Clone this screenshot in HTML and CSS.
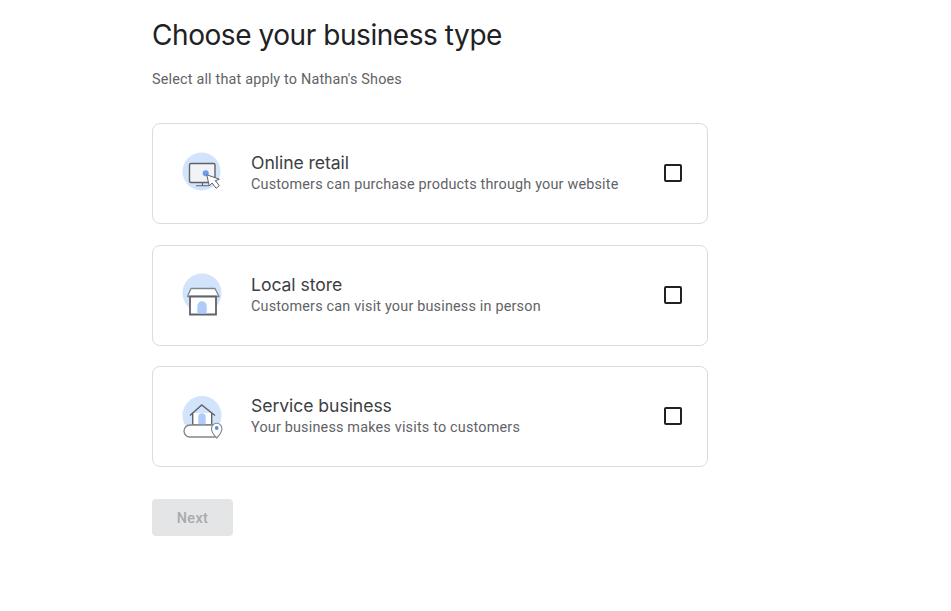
FILE: index.html
```html
<!DOCTYPE html>
<html lang="en">
<head>
<meta charset="utf-8">
<title>Choose your business type</title>
<link rel="stylesheet" href="styles.css">
</head>
<body>
<main class="page">
  <h1 class="title">Choose your business type</h1>
  <p class="subtitle">Select all that apply to Nathan's Shoes</p>
  <div class="cards">
    <label class="card">
      <svg class="icon" viewBox="0 0 48 48" width="48" height="48" aria-hidden="true">
        <circle cx="23.500" cy="22.500" r="19" fill="#d2e3fc"/>
        <rect x="11.500" y="14.500" width="25.500" height="19" rx="1.500" fill="#f1f3f4" stroke="#5f6368" stroke-width="1.400"/>
        <path d="M18 36.800h13M24.500 33.500v3" fill="none" stroke="#5f6368" stroke-width="1.100"/>
        <circle cx="27.700" cy="24.300" r="3" fill="#669df6"/>
        <path d="M28.700 25.700l2.600 11.300 2.800-3 4 5.300 3.200-2.600-4-5 4-1.500z" fill="#fff" stroke="#5f6368" stroke-width="1" stroke-linejoin="round"/>
      </svg>
      <span class="text">
        <span class="name">Online retail</span>
        <span class="desc">Customers can purchase products through your website</span>
      </span>
      <span class="box"></span>
    </label>
    <label class="card">
      <svg class="icon" viewBox="0 0 48 48" width="48" height="48" aria-hidden="true">
        <circle cx="24" cy="22" r="19.500" fill="#d2e3fc"/>
        <path d="M9.500 25.500l3.500-8h24l4 8z" fill="#fff" stroke="#80868b" stroke-width="1.300" stroke-linejoin="round"/>
        <path d="M12 25.500h26V43.500H12z" fill="#fff" stroke="#5f6368" stroke-width="1.800"/>
        <path d="M19.300 42.600V35a4.700 4.700 0 0 1 9.400 0v7.600z" fill="#aecbfa"/>
      </svg>
      <span class="text">
        <span class="name">Local store</span>
        <span class="desc">Customers can visit your business in person</span>
      </span>
      <span class="box"></span>
    </label>
    <label class="card">
      <svg class="icon" viewBox="0 0 48 48" width="48" height="48" aria-hidden="true">
        <circle cx="24" cy="23.500" r="19.500" fill="#d2e3fc"/>
        <path d="M14.700 21v12h19V21" fill="#fff" stroke="#5f6368" stroke-width="1.400"/>
        <path d="M12 23.500L23.700 13 37 23.500" fill="none" stroke="#5f6368" stroke-width="1.400"/>
        <path d="M20.300 33v-8a3.700 3.700 0 0 1 7.400 0v8z" fill="#aecbfa"/>
        <path d="M36 33H12a5.800 5.800 0 0 0 0 12h24a5.800 5.800 0 0 0 0-12z" fill="#fff" stroke="#80868b" stroke-width="1.300"/>
        <path d="M38.700 46c-3-3-5.200-6-5.200-9.500a5.200 5.200 0 0 1 10.400 0c0 3.500-2.200 6.500-5.200 9.500z" fill="#fff" stroke="#80868b" stroke-width="1.100"/>
        <circle cx="38.700" cy="36" r="1.900" fill="#5f8fd8"/>
      </svg>
      <span class="text">
        <span class="name">Service business</span>
        <span class="desc">Your business makes visits to customers</span>
      </span>
      <span class="box"></span>
    </label>
  </div>
  <button class="next" disabled>Next</button>
</main>
</body>
</html>
```
FILE: styles.css
```css
* { box-sizing: border-box; }
html, body { margin: 0; background: #fff; }
body { font-family: Roboto, sans-serif; height: 611px; overflow: hidden; }
.page { width: 556px; margin-left: 152px; padding-top: 17px; }
.title { margin: 0; font: 400 28px/36px Inter, sans-serif; letter-spacing: -0.44px; color: #202124; }
.subtitle { margin: 17px 0 0; font-size: 14.4px; line-height: 20px; letter-spacing: 0.18px; color: #5f6368; }
.cards { margin-top: 33px; display: flex; flex-direction: column; gap: 20.5px; }
.card { height: 101px; display: flex; align-items: center; border: 1px solid #dadce0; border-radius: 8px; padding: 0 24px 1px 25px; }
.icon { flex: none; width: 48px; height: 48px; margin-right: 25px; }
.text { flex: 1; display: flex; flex-direction: column; padding-top: 1px; }
.name { font: 400 17.6px/21px Inter, sans-serif; letter-spacing: -0.06px; color: #3c4043; margin-bottom: 1px; }
.desc { font-size: 14.4px; line-height: 21px; letter-spacing: 0.19px; color: #5f6368; }
.box { flex: none; width: 18px; height: 18px; border: 2px solid #202124; border-radius: 2px; margin-right: 1px; }
.next { display: block; margin-top: 32px; width: 81px; height: 37px; border: 0; border-radius: 4px; background: #e4e5e6; color: #a8aaad; font: 500 14.4px Roboto, sans-serif; letter-spacing: 0.4px; padding-top: 3px; }
```
